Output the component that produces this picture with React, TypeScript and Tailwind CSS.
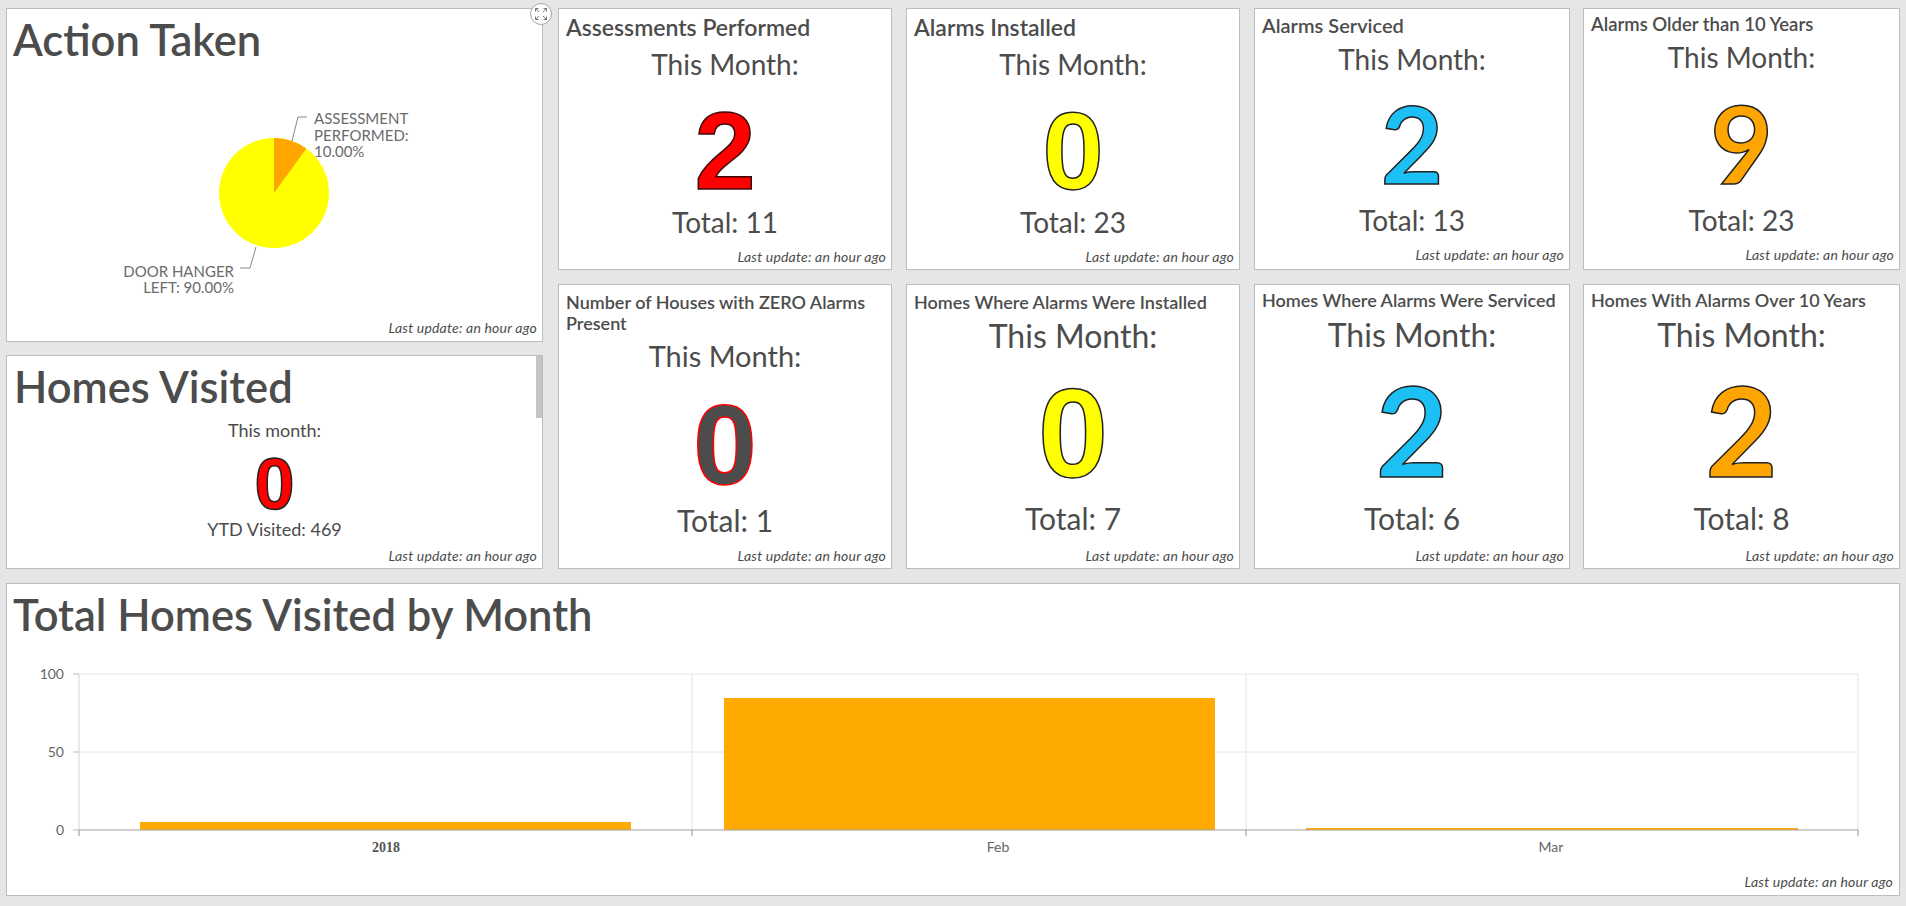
import React from "react";

const LAST = "Last update: an hour ago";

function LastUpdate({ cls }: { cls: string }) {
  return (
    <div className={`text-right italic text-[14px] leading-[16px] tracking-[0.2px] text-[#4c4c4c] ${cls}`}>
      {LAST}
    </div>
  );
}

type Stat = {
  title: string;
  titleCls: string;
  monthCls: string;
  num: string;
  numCls: string;
  total: string;
  totalCls: string;
  updCls: string;
  w: string;
};

const LIB = "font-[family-name:Liberation_Sans,Arial,sans-serif] font-bold";
const LATO = "font-[family-name:Lato,sans-serif] font-bold";

const row1: Stat[] = [
  {
    w: "w-[334px]",
    title: "Assessments Performed",
    titleCls: "pt-[6px] text-[23px] leading-[24px]",
    monthCls: "mt-[8px] text-[28px] leading-[34px]",
    num: "2",
    numCls: `${LIB} mt-[26px] text-[110px] leading-[88px] text-[#ff0000] [-webkit-text-stroke:1.5px_#3a0a0a]`,
    total: "Total: 11",
    totalCls: "mt-[10px] text-[28px] leading-[34px]",
    updCls: "mt-[10px]",
  },
  {
    w: "w-[334px]",
    title: "Alarms Installed",
    titleCls: "pt-[6px] text-[23px] leading-[24px]",
    monthCls: "mt-[8px] text-[28px] leading-[34px]",
    num: "0",
    numCls: `${LIB} mt-[26px] text-[110px] leading-[88px] text-[#ffff00] [-webkit-text-stroke:1.5px_#222]`,
    total: "Total: 23",
    totalCls: "mt-[10px] text-[28px] leading-[34px]",
    updCls: "mt-[10px]",
  },
  {
    w: "w-[316px]",
    title: "Alarms Serviced",
    titleCls: "pt-[5px] text-[20px] leading-[22px]",
    monthCls: "mt-[6px] text-[28px] leading-[34px]",
    num: "2",
    numCls: `${LATO} mt-[23px] text-[108px] leading-[86px] text-[#1dc0f5] [-webkit-text-stroke:1.5px_#222]`,
    total: "Total: 13",
    totalCls: "mt-[18px] text-[28px] leading-[34px]",
    updCls: "mt-[10px]",
  },
  {
    w: "w-[317px]",
    title: "Alarms Older than 10 Years",
    titleCls: "pt-[5px] text-[18.5px] leading-[21px]",
    monthCls: "mt-[5px] text-[28px] leading-[34px]",
    num: "9",
    numCls: `${LATO} mt-[25px] text-[108px] leading-[86px] text-[#ffa500] [-webkit-text-stroke:1.5px_#222]`,
    total: "Total: 23",
    totalCls: "mt-[18px] text-[28px] leading-[34px]",
    updCls: "mt-[10px]",
  },
];

const row2: Stat[] = [
  {
    w: "w-[334px]",
    title: "Number of Houses with ZERO Alarms Present",
    titleCls: "pt-[7px] text-[18px] leading-[21px] pr-[20px]",
    monthCls: "mt-[4px] text-[29px] leading-[35px]",
    num: "0",
    numCls: `${LIB} mt-[26px] text-[114px] leading-[91px] text-[#4c4c4c] [-webkit-text-stroke:1.5px_#ff0000]`,
    total: "Total: 1",
    totalCls: "mt-[12px] text-[30px] leading-[36px]",
    updCls: "mt-[10px]",
  },
  {
    w: "w-[334px]",
    title: "Homes Where Alarms Were Installed",
    titleCls: "pt-[7px] text-[18px] leading-[21px]",
    monthCls: "mt-[4px] text-[32px] leading-[38px]",
    num: "0",
    numCls: `${LIB} mt-[29px] text-[126px] leading-[100px] text-[#ffff00] [-webkit-text-stroke:1.5px_#222]`,
    total: "Total: 7",
    totalCls: "mt-[16px] text-[30px] leading-[36px]",
    updCls: "mt-[12px]",
  },
  {
    w: "w-[316px]",
    title: "Homes Where Alarms Were Serviced",
    titleCls: "pt-[5px] text-[18px] leading-[21px]",
    monthCls: "mt-[5px] text-[32px] leading-[38px]",
    num: "2",
    numCls: `${LATO} mt-[25px] text-[125px] leading-[100px] text-[#1dc0f5] [-webkit-text-stroke:1.5px_#222]`,
    total: "Total: 6",
    totalCls: "mt-[21px] text-[30px] leading-[36px]",
    updCls: "mt-[12px]",
  },
  {
    w: "w-[317px]",
    title: "Homes With Alarms Over 10 Years",
    titleCls: "pt-[5px] text-[18px] leading-[21px]",
    monthCls: "mt-[5px] text-[32px] leading-[38px]",
    num: "2",
    numCls: `${LATO} mt-[25px] text-[125px] leading-[100px] text-[#ffa500] [-webkit-text-stroke:1.5px_#222]`,
    total: "Total: 8",
    totalCls: "mt-[21px] text-[30px] leading-[36px]",
    updCls: "mt-[12px]",
  },
];

function StatCard({ s, h }: { s: Stat; h: string }) {
  return (
    <div className={`${s.w} ${h} bg-white border border-[#bdbdbd] flex flex-col overflow-hidden`}>
      <div className={`px-[7px] font-semibold text-[#4c4c4c] ${s.titleCls}`}>{s.title}</div>
      <div className={`text-center text-[#4c4c4c] ${s.monthCls}`}>This Month:</div>
      <div className={`text-center ${s.numCls}`}>{s.num}</div>
      <div className={`text-center text-[#4c4c4c] ${s.totalCls}`}>{s.total}</div>
      <LastUpdate cls={`pr-[5px] ${s.updCls}`} />
    </div>
  );
}

function ExpandIcon() {
  return (
    <div className="absolute left-[523px] top-[-6px] w-[22px] h-[22px] rounded-full border border-[#a8a8a8] bg-white flex items-center justify-center">
      <svg width="14" height="14" viewBox="0 0 14 14" fill="none" stroke="#777" strokeWidth="1">
        <path d="M5 5 L1.5 1.5 M1.5 1.5 H4.5 M1.5 1.5 V4.5" />
        <path d="M9 5 L12.5 1.5 M12.5 1.5 H9.5 M12.5 1.5 V4.5" />
        <path d="M5 9 L1.5 12.5 M1.5 12.5 H4.5 M1.5 12.5 V9.5" />
        <path d="M9 9 L12.5 12.5 M12.5 12.5 H9.5 M12.5 12.5 V9.5" />
      </svg>
    </div>
  );
}

function PieChart() {
  const cx = 267;
  const cy = 129;
  const r = 55;
  const a = (36 * Math.PI) / 180;
  const x2 = cx + r * Math.sin(a);
  const y2 = cy - r * Math.cos(a);
  return (
    <svg width="535" height="256" className="block mt-[1px]">
      <circle cx={cx} cy={cy} r={r} fill="#ffff00" />
      <path d={`M${cx} ${cy} L${cx} ${cy - r} A${r} ${r} 0 0 1 ${x2} ${y2} Z`} fill="#ffa500" />
      <polyline points="285,77 291,53 300,53" fill="none" stroke="#888" strokeWidth="1" />
      <polyline points="249,183 243,204 233,204" fill="none" stroke="#888" strokeWidth="1" />
      <g fill="#6b6b6b" fontFamily="Lato, sans-serif" fontSize="15">
        <text x="307" y="60">ASSESSMENT</text>
        <text x="307" y="77">PERFORMED:</text>
        <text x="307" y="93">10.00%</text>
        <text x="227" y="213" textAnchor="end">DOOR HANGER</text>
        <text x="227" y="229" textAnchor="end">LEFT: 90.00%</text>
      </g>
    </svg>
  );
}

function BarChart() {
  const top = 35;
  const mid = 113;
  const base = 191;
  const left = 72;
  const right = 1851;
  const grids = [685, 1239];
  const bars = [
    { x1: 133, x2: 624, y: 183 },
    { x1: 717, x2: 1208, y: 59 },
    { x1: 1299, x2: 1791, y: 189 },
  ];
  return (
    <svg width="1892" height="235" className="block mt-[1px]">
      <line x1={left} y1={top} x2={right} y2={top} stroke="#e6e6e6" />
      <line x1={left} y1={mid} x2={right} y2={mid} stroke="#e6e6e6" />
      <line x1={left} y1={top} x2={left} y2={base + 6} stroke="#d6d6d6" />
      {grids.map((g) => (
        <line key={g} x1={g} y1={top} x2={g} y2={base + 6} stroke="#e3e3e3" />
      ))}
      <line x1={right} y1={top} x2={right} y2={base + 6} stroke="#e3e3e3" />
      {[top, mid, base].map((y) => (
        <line key={y} x1={66} y1={y} x2={left} y2={y} stroke="#bbb" />
      ))}
      {bars.map((b, i) => (
        <rect key={i} x={b.x1} y={b.y} width={b.x2 - b.x1} height={base - b.y} fill="#ffaa00" />
      ))}
      <line x1={left} y1={base} x2={right} y2={base} stroke="#a0a0a0" />
      {[left, ...grids, right].map((g) => (
        <line key={"t" + g} x1={g} y1={base} x2={g} y2={base + 6} stroke="#a0a0a0" />
      ))}
      <g fill="#666" fontFamily="Lato, sans-serif" fontSize="14" textAnchor="end">
        <text x="57" y={top + 5}>100</text>
        <text x="57" y={mid + 5}>50</text>
        <text x="57" y={base + 5}>0</text>
      </g>
      <text x="379" y="213" textAnchor="middle" fontFamily="Liberation Serif, serif" fontWeight="bold" fontSize="14" fill="#555">
        2018
      </text>
      <g fill="#666" fontFamily="Lato, sans-serif" fontSize="14" textAnchor="middle">
        <text x="991" y="213">Feb</text>
        <text x="1544" y="213">Mar</text>
      </g>
    </svg>
  );
}

export default function App() {
  return (
    <div className="w-[1906px] h-[906px] overflow-hidden bg-[#e6e6e6] pl-[6px] pt-[8px] font-[family-name:Lato,sans-serif] text-[#4c4c4c]">
      <div className="flex">
        <div className="w-[537px] flex flex-col gap-[13px]">
          <div className="relative h-[334px] bg-white border border-[#bdbdbd] flex flex-col">
            <div className="pt-[6px] px-[6px] text-[43.5px] leading-[48px] font-semibold">Action Taken</div>
            <PieChart />
            <LastUpdate cls="pr-[5px]" />
            <ExpandIcon />
          </div>
          <div className="relative h-[214px] bg-white border border-[#bdbdbd] flex flex-col overflow-hidden">
            <div className="pt-[6px] px-[7px] text-[43.5px] leading-[48px] font-semibold">Homes Visited</div>
            <div className="mt-[9px] text-center text-[18px] leading-[22px]">This month:</div>
            <div className={`${LIB} mt-[14px] text-center text-[72px] leading-[58px] text-[#ff0000] [-webkit-text-stroke:1.5px_#222]`}>0</div>
            <div className="mt-[5px] text-center text-[18px] leading-[22px]">YTD Visited: 469</div>
            <LastUpdate cls="mt-[8px] pr-[5px]" />
            <div className="absolute right-0 top-0 w-[6px] h-[62px] bg-[#c6c6c6]" />
          </div>
        </div>
        <div className="ml-[15px] flex flex-col gap-[14px]">
          <div className="flex gap-[14px]">
            {row1.slice(0, 2).map((s) => (
              <StatCard key={s.title} s={s} h="h-[262px]" />
            ))}
            <div className="flex gap-[13px]">
              {row1.slice(2).map((s) => (
                <StatCard key={s.title} s={s} h="h-[262px]" />
              ))}
            </div>
          </div>
          <div className="flex gap-[14px]">
            {row2.slice(0, 2).map((s) => (
              <StatCard key={s.title} s={s} h="h-[285px]" />
            ))}
            <div className="flex gap-[13px]">
              {row2.slice(2).map((s) => (
                <StatCard key={s.title} s={s} h="h-[285px]" />
              ))}
            </div>
          </div>
        </div>
      </div>
      <div className="mt-[14px] w-[1894px] h-[313px] bg-white border border-[#bdbdbd] flex flex-col">
        <div className="pt-[6px] px-[6px] text-[43.5px] leading-[48px] font-semibold">Total Homes Visited by Month</div>
        <BarChart />
        <LastUpdate cls="pr-[6px]" />
      </div>
    </div>
  );
}
